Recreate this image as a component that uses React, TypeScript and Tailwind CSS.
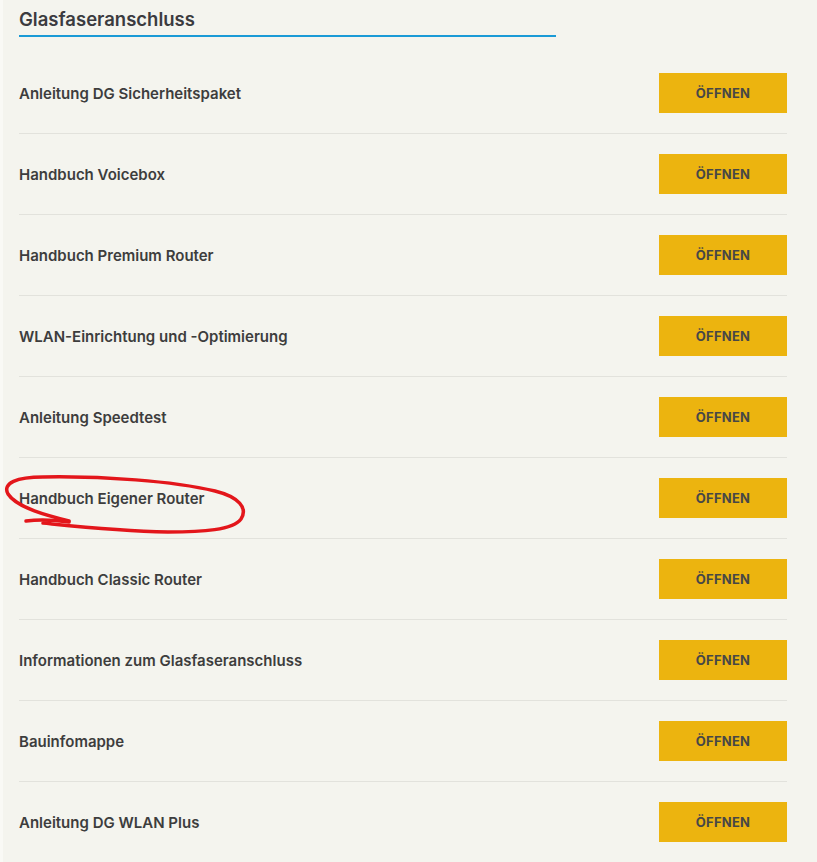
const documents = [
  'Anleitung DG Sicherheitspaket',
  'Handbuch Voicebox',
  'Handbuch Premium Router',
  'WLAN-Einrichtung und -Optimierung',
  'Anleitung Speedtest',
  'Handbuch Eigener Router',
  'Handbuch Classic Router',
  'Informationen zum Glasfaseranschluss',
  'Bauinfomappe',
  'Anleitung DG WLAN Plus',
]

function Scribble() {
  // hand-drawn red loop around one entry
  return (
    <svg
      className="absolute left-0 top-0 pointer-events-none"
      width="260"
      height="545"
      viewBox="0 0 260 545"
      fill="none"
    >
      <path
        d="M66 521 C46 516 14 508 5 494 C-1 483 14 477 40 477 C100 476 170 481 212 491 C236 497 245 508 238 519 C230 530 200 532 165 532 C115 531 70 526 40 523"
        stroke="#e3161b"
        strokeWidth="3.5"
        strokeLinecap="round"
      />
      <path d="M23 521 C38 519 52 520 66 522" stroke="#e3161b" strokeWidth="3.5" strokeLinecap="round" />
    </svg>
  )
}

export default function App() {
  return (
    <div className="min-h-screen bg-[#f9f9f5] font-['Inter',sans-serif] text-[#3d3d3d]">
      <div className="relative ml-[3px] min-h-screen bg-[#f4f4ee] pl-4 pb-4">
        <div className="w-[768px]">
          <h2 className="w-[537px] border-b-2 border-[#1a9ad6] pt-[5px] pb-[2px] text-[18.5px] leading-[28px] font-semibold text-[#3b3b3f]">
            Glasfaseranschluss
          </h2>
          <ul className="mt-4">
            {documents.map((title, i) => (
              <li
                key={title}
                className={`flex items-center justify-between py-5 ${i < documents.length - 1 ? 'border-b border-[#e2e2dc]' : ''}`}
              >
                <span className="pt-[3px] text-[15px] font-semibold">{title}</span>
                <button className="h-10 w-32 bg-[#ecb40f] pt-px text-[13px] font-bold tracking-[0.02em] text-[#474747]">
                  ÖFFNEN
                </button>
              </li>
            ))}
          </ul>
        </div>
        <Scribble />
      </div>
    </div>
  )
}
